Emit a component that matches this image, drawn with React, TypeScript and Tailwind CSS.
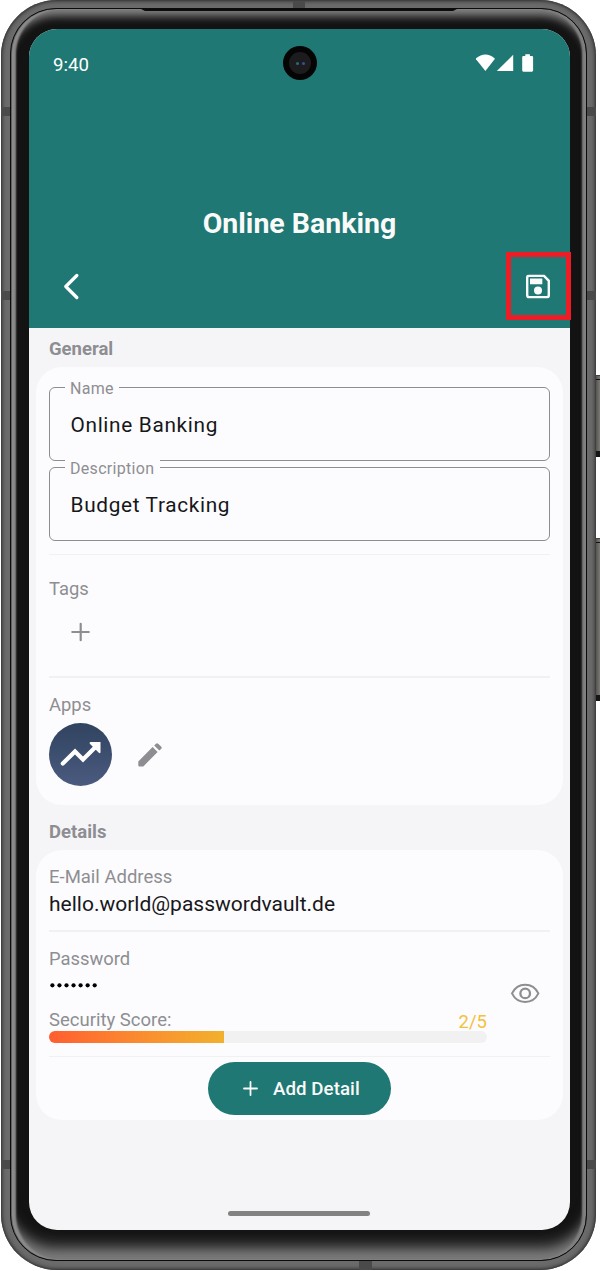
import React from 'react';

function Field({ label, value, legend }: { label: string; value: string; legend: string }) {
  return (
    <div className="relative h-[74px] rounded-[6px] border-[1.5px] border-[#8d8c8f] pl-[20.5px] pt-[21.5px]">
      <span className={`absolute -top-[9px] left-[15px] h-[20px] bg-[#fcfcfe] pl-[5px] text-[16px] leading-[20px] tracking-[0.3px] text-[#8e8e92] ${legend}`}>
        {label}
      </span>
      <div className="h-[30px] text-[20.8px] leading-[30px] tracking-[0.67px] text-[#17171a]">{value}</div>
    </div>
  );
}

function Notch({ className }: { className: string }) {
  return <div className={`absolute bg-[#4a4a4a] ${className}`} />;
}

function SideButton({ className }: { className: string }) {
  return (
    <div className={`absolute left-[596px] w-[4px] border-b-[6px] border-t border-b-[#161616] border-t-[#444] bg-linear-to-r from-[#55554f] to-[#7b7a76] ${className}`}>
      <div className="mt-[3px] h-px bg-[#111]" />
    </div>
  );
}

function StatusBar() {
  return (
    <div className="relative flex h-[70px] items-center justify-between pl-[24px] pr-[36px]">
      <span className="pt-px text-[18.6px] leading-[24px] text-white">9:40</span>
      <div className="absolute left-[254px] top-[17px] flex size-[34px] items-center justify-center rounded-full bg-[#050505]">
        <div className="flex size-[22px] items-center justify-center gap-[3px] rounded-full bg-[#1c1c1e]">
          <i className="size-[3px] rounded-full bg-[#286b73]" />
          <i className="size-[3px] rounded-full bg-[#3c4d91]" />
        </div>
      </div>
      <svg width="58" height="18" viewBox="0 0 58 18" fill="#fff" className="-mt-[2px]">
        <path d="M-.4 4.7Q9.3-3.6 19 4.7L9.4 16.9Z" />
        <path d="M37.2 .8V17H20.8Z" />
        <path d="M49.3 .3h4.6v1.6h2q1.2 0 1.2 1.2v13.5q0 1.1-1.2 1.1h-8.5q-1.2 0-1.2-1.1V3.1q0-1.2 1.2-1.2h1.9z" />
      </svg>
    </div>
  );
}

export default function App() {
  return (
    <div className="relative h-[1271px] w-[600px] overflow-hidden bg-white font-['Roboto',sans-serif]">
      <SideButton className="top-[375px] h-[82px]" />
      <SideButton className="top-[538px] h-[163px]" />
      <div className="relative ml-px h-[1270px] w-[595px] rounded-[56px] bg-[#6c6c6c] pl-[9px] pt-[8px] shadow-[inset_0_0_3px_1px_#333,inset_0_0_6px_1px_#505050]">
        <Notch className="left-0 top-[107px] h-[9px] w-[9px]" />
        <Notch className="right-0 top-[107px] h-[9px] w-[9px]" />
        <Notch className="left-0 top-[291px] h-[9px] w-[9px]" />
        <Notch className="right-0 top-[291px] h-[9px] w-[9px]" />
        <Notch className="left-0 top-[1160px] h-[9px] w-[9px]" />
        <Notch className="right-0 top-[1160px] h-[9px] w-[9px]" />
        <Notch className="left-[292px] top-[1px] h-[7px] w-[12px]" />
        <Notch className="left-[358px] bottom-0 h-[9px] w-[13px]" />
        <div className="relative h-[1253px] w-[577px] rounded-[46px] border border-[#0c0c0c] bg-[#131313] pl-[18px] pt-[20px] shadow-[inset_1px_0_0_#606060,inset_5px_0_2px_#8b8b8b,inset_-4px_0_2px_#808080,inset_0_-15px_10px_-5px_#7a7a7a,inset_0_-25px_12px_-6px_#3c3c3c,inset_0_11px_8px_-4px_#838383]">
          <svg className="absolute left-[128px] top-[-1px]" width="320" height="4" viewBox="0 0 320 4">
            <path d="M0 0H320L314 3H6Z" fill="#0c0c0c" />
          </svg>
          <div className="flex h-[1201px] w-[541px] flex-col overflow-hidden rounded-[28px] bg-[#f5f5f8]">
            <header className="h-[299px] shrink-0 bg-[#1f7873]">
              <StatusBar />
              <h1 className="mt-[107px] text-center text-[28.5px] font-bold leading-[36px] text-[#fafafa]">Online Banking</h1>
              <div className="mt-[9px] flex h-[70px] items-center justify-between pl-[35px] pr-[20px]">
                <svg width="17" height="27" viewBox="0 0 17 27" fill="none" stroke="#fff" strokeWidth="3.2" strokeLinecap="round" strokeLinejoin="round">
                  <path d="M12.8 2.5L1.8 13.5L12.8 24.5" />
                </svg>
                <svg width="24" height="24" viewBox="0 0 24 24" fill="none" className="translate-y-[0.5px]">
                  <path d="M3 1.2H17.8L22.8 6.3V20.8Q22.8 22.8 20.8 22.8H3.2Q1.2 22.8 1.2 20.8V3Q1.2 1.2 3 1.2Z" stroke="#fafafa" strokeWidth="2.4" />
                  <path d="M4 4H16.3V9.7H4Z" fill="#fafafa" />
                  <circle cx="12" cy="15.9" r="4" fill="#fafafa" />
                </svg>
              </div>
            </header>
            <main className="flex grow flex-col pl-[7px]">
              <h2 className="h-[39px] pl-[13px] text-[18.5px] font-bold leading-[42px] text-[#8e8e92]">General</h2>
              <section className="h-[438px] w-[527px] rounded-[26px] bg-[#fcfcfe] px-[13px] pt-[20px]">
                <div className="flex flex-col gap-[6px]">
                  <Field label="Name" value="Online Banking" legend="w-[54px]" />
                  <Field label="Description" value="Budget Tracking" legend="w-[95px]" />
                </div>
                <div className="mt-[13px] h-px bg-[#f1f1f2]" />
                <div className="h-[121px] pt-[22px]">
                  <div className="text-[18.4px] leading-[24px] text-[#8e8e92]">Tags</div>
                  <svg width="20" height="20" viewBox="0 0 20 20" stroke="#8e8e92" strokeWidth="2.2" strokeLinecap="round" className="ml-[22px] mt-[21px]">
                    <path d="M9.7 1.8V18.2M1.3 10H17.8" />
                  </svg>
                </div>
                <div className="h-[2px] bg-[#f1f1f3]" />
                <div className="pt-[15px] text-[18.4px] leading-[24px] text-[#8e8e92]">Apps</div>
                <div className="mt-[6px] flex items-center">
                  <div className="flex size-[63px] items-center justify-center rounded-full bg-linear-to-b from-[#30435f] to-[#4b5b80]">
                    <svg width="63" height="63" viewBox="0 0 63 63">
                      <path d="M13.8 40.5L26 28.4L34 36.5L47.5 23" fill="none" stroke="#fff" strokeWidth="4.2" strokeLinecap="round" />
                      <path d="M41.4 19H51.5V29.6Q51 30.6 49.8 29.8L40.8 20.8Q40.2 19.4 41.4 19Z" fill="#fff" />
                    </svg>
                  </div>
                  <svg width="26" height="26" viewBox="0 0 26 26" fill="#8e8e92" className="ml-[25px]">
                    <path d="M1.3 19.4L15.6 5.1L20.6 10.1L6.3 24.4H2.1Q1.3 24.4 1.3 23.6ZM17.2 3.5L19 1.7Q20.1.7 21.2 1.7L24.3 4.7Q25.1 5.8 24.3 6.8L22.3 8.6Z" />
                  </svg>
                </div>
              </section>
              <h2 className="h-[45px] pl-[13px] text-[18.5px] font-bold leading-[54px] text-[#8e8e92]">Details</h2>
              <section className="h-[270px] w-[527px] rounded-[26px] bg-[#fcfcfe] px-[13px] pt-[15px]">
                <div className="text-[18.5px] leading-[24px] text-[#8e8e92]">E-Mail Address</div>
                <div className="h-[30px] text-[21px] leading-[30px] text-[#17171a]">hello.world@passwordvault.de</div>
                <div className="mt-[11px] h-[2px] bg-[#f1f1f3]" />
                <div className="flex h-[124px] justify-between pt-[14px]">
                  <div className="w-[438px]">
                    <div className="translate-y-px text-[18.4px] leading-[24px] text-[#8e8e92]">Password</div>
                    <svg width="50" height="6" viewBox="0 0 50 6" className="mt-[12px]">
                      {Array.from({ length: 7 }, (_, i) => (
                        <circle key={i} cx={3.4 + i * 7.05} cy="3.3" r="2.1" fill="#000" />
                      ))}
                    </svg>
                    <div className="mt-[18px] flex h-[25px] justify-between text-[18.5px] leading-[26px] text-[#8e8e92]">
                      <span className="pt-px">Security Score:</span>
                      <span className="pt-[3px] text-[#f3c13a]">2/5</span>
                    </div>
                    <div className="h-[12px] overflow-hidden rounded-full bg-[#f1f1f2]">
                      <div className="h-full w-[175px] bg-linear-to-r from-[#ff5d30] to-[#f2b02d]" />
                    </div>
                  </div>
                  <svg width="30" height="20" viewBox="0 0 30 20" fill="none" stroke="#8e8e92" className="mr-[10px] mt-[37px]">
                    <path d="M2 10.4Q6.2 1.7 15.2 1.7T28.4 10.4Q24.2 19 15.2 19T2 10.4Z" strokeWidth="2" />
                    <circle cx="15.2" cy="10.4" r="4.8" strokeWidth="2.3" />
                  </svg>
                </div>
                <div className="h-px bg-[#f1f1f2]" />
                <button className="mx-auto mt-[5px] flex h-[53px] w-[183px] items-center rounded-full bg-[#1f7873] pl-[35px] text-[18.7px] font-medium text-[#fafafa]">
                  <svg width="15" height="15" viewBox="0 0 15 15" stroke="#fafafa" strokeWidth="1.8" strokeLinecap="round">
                    <path d="M7.5 1V14M1 7.5H14" />
                  </svg>
                  <span className="ml-[15px] whitespace-nowrap pt-[2px] tracking-[0.06px]">Add Detail</span>
                </button>
              </section>
              <div className="ml-[192px] mt-[91px] h-[5px] w-[142px] rounded-full bg-[#828282]" />
            </main>
          </div>
        </div>
      </div>
      <div className="absolute left-[506px] top-[252px] h-[68px] w-[65px] border-5 border-[#ee1c25]" />
    </div>
  );
}
